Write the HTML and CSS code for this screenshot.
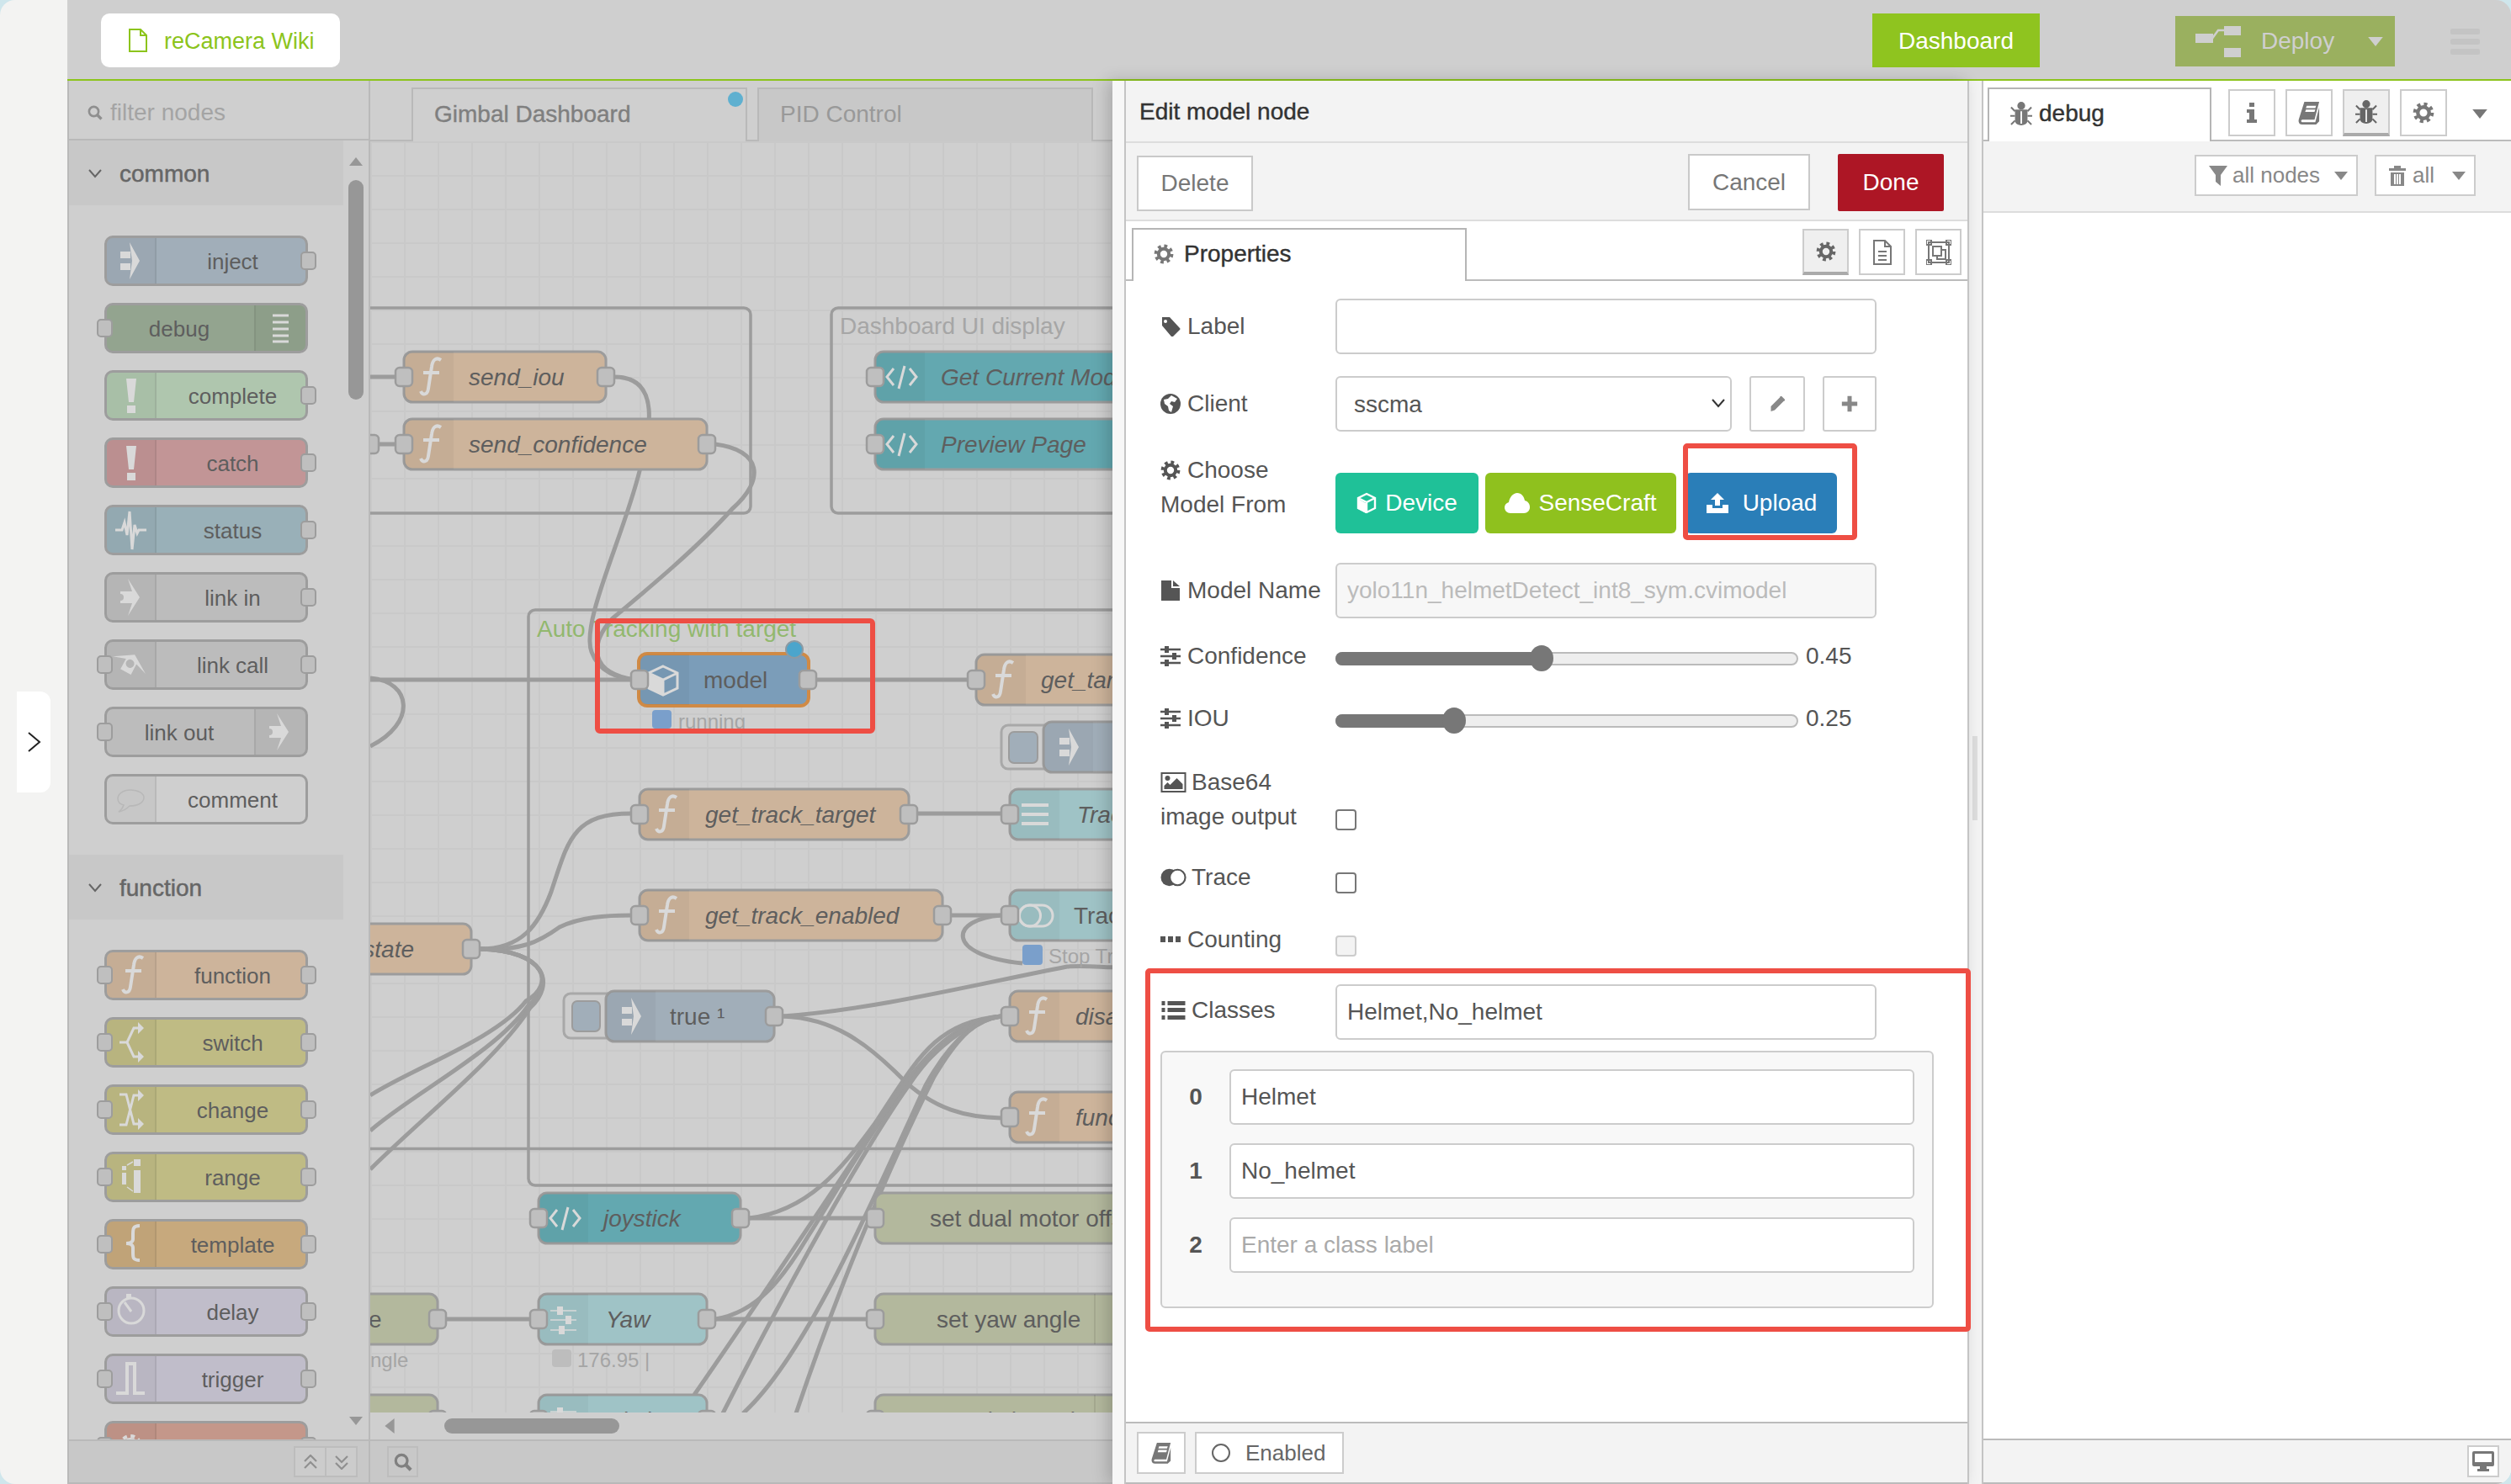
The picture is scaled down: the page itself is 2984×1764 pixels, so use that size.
FILE: index.html
```html
<!DOCTYPE html>
<html>
<head>
<meta charset="utf-8">
<title>reCamera Node-RED</title>
<link rel="stylesheet" href="styles.css">
</head>
<body>

<!-- icon sprites, node icons are drawn in a 59x60 cell -->
<svg class="sprites" width="0" height="0">
  <defs>
    <g id="i-f"><path class="ni-s" d="M46 10C40 6 36 10 35 18L31 44C30 52 24 52 22 47M25 25H44"/></g>
    <g id="i-inject"><path class="ni" d="M19 19H31V27H19ZM19 33H31V41H19ZM30 8L42 30L30 52L33 30Z"/></g>
    <g id="i-lines"><path class="ni-s thin" d="M23 15H42M23 23H42M23 31H42M23 39H42M23 46H42"/></g>
    <g id="i-alert"><path class="ni" d="M26 10H38L35 38H29ZM27 42H37V51H27Z"/></g>
    <g id="i-wave"><path class="ni-s thin" d="M13 30H21L24 21L27 36L30 8L33 53L36 24L39 34L41 30H50"/></g>
    <g id="i-link"><path class="ni" fill-rule="evenodd" d="M28 8L42 30L28 52L33 37H19V23H33ZM19 26V34A4 4 0 0 0 19 26Z"/></g>
    <g id="i-linkcall"><path class="ni" transform="rotate(-62 31 28) translate(0 -2)" fill-rule="evenodd" d="M28 8L42 30L28 52L33 37H19V23H33ZM30 25A5 5 0 1 0 30 35A5 5 0 1 0 30 25Z"/></g>
    <g id="i-comment"><path class="ni-o" d="M31 19C22 19 16 24 16 29C16 33 19 36 23 37C22 40 20 43 17 45C23 44 27 41 30 38C40 38 47 34 47 28C47 23 40 19 31 19Z"/></g>
    <g id="i-switch"><path class="ni-s thin" d="M18 30H27L35 13H42M27 30L35 47H42"/><path class="ni" d="M40 6L47 13L40 20ZM40 40L47 47L40 54Z"/></g>
    <g id="i-change"><path class="ni-s thin" d="M18 12H26L35 47H42M18 48H26L35 13H42"/><path class="ni" d="M40 6L47 13L40 20ZM40 40L47 47L40 54Z"/></g>
    <g id="i-range"><path class="ni" d="M21 17H26V22H21ZM21 25H26V39H21ZM35 9H43V17H35ZM35 22H43V49H35Z"/><path class="ni-s hair" d="M27 16L34 12M27 42L34 47"/></g>
    <g id="i-template"><path class="ni-s" d="M42 8C34 8 34 12 34 18V24C34 27 31 29 26 29C31 29 34 31 34 34V40C34 46 34 49 42 49"/></g>
    <g id="i-delay"><circle class="ni-s thin" cx="32" cy="29" r="15"/><path class="ni-s thin" d="M24 19L32 30"/><path class="ni" d="M26 9H32V14H26Z"/></g>
    <g id="i-trigger"><path class="ni-s" d="M14 47H27V12H36V47H48"/></g>
    <g id="i-gear"><circle class="ni-s" cx="31" cy="30" r="12" stroke-dasharray="5 4.4"/><circle class="ni-s" cx="31" cy="30" r="8"/></g>
    <g id="i-code"><path class="ni-s thin" d="M22 20L14 30L22 40M41 20L49 30L41 40M35 17L28 44"/></g>
    <g id="i-cube"><path class="ni" d="M12 24L29 32V49L12 41Z"/><path class="ni-s thin" d="M29 15L46 23V41L29 49L12 41V23ZM12 23L29 31L46 23M29 31V49"/></g>
    <g id="i-list"><path class="ni-s" d="M14 19H46M14 30H46M14 41H46"/></g>
    <g id="i-toggle"><rect class="ni-s thin" x="11" y="18" width="40" height="25" rx="12.5"/><circle class="ni-s thin" cx="24" cy="30.5" r="12.5"/></g>
    <g id="i-sliders"><path class="ni-s hair" d="M14 20H45M14 31H45M14 43H45"/><path class="ni" d="M22 15H29V25H22ZM32 26H39V36H32ZM24 38H31V48H24Z"/></g>

    <!-- small ui icons, take the text colour -->
    <symbol id="u-gear" viewBox="0 0 24 24"><circle cx="12" cy="12" r="9.4" fill="none" stroke="currentColor" stroke-width="4" stroke-dasharray="3.7 3.7"/><circle cx="12" cy="12" r="6.2" fill="none" stroke="currentColor" stroke-width="4"/></symbol>
    <symbol id="u-tag" viewBox="0 0 24 24"><path fill="currentColor" d="M2 1H11L23 14Q24 15 23 16L15 24Q14 25 13 24L2 11ZM6 4A2 2 0 1 0 6 8A2 2 0 1 0 6 4Z" fill-rule="evenodd"/></symbol>
    <symbol id="u-globe" viewBox="0 0 24 24"><circle cx="12" cy="12" r="12" fill="currentColor"/><path fill="#fff" d="M13 2L20 6L17 10L13 9L11 12L15 15L13 22L10 20L9 15L5 12L4 7L9 6Z"/></symbol>
    <symbol id="u-file" viewBox="0 0 24 24"><path fill="currentColor" d="M1 0H13V9H23V24H1ZM15 0L23 7H15Z"/></symbol>
    <symbol id="u-sliders" viewBox="0 0 24 24"><path fill="none" stroke="currentColor" stroke-width="2.4" d="M0 4H24M0 12H24M0 20H24"/><path fill="currentColor" d="M5 0H10V8H5ZM14 8H19V16H14ZM5 16H10V24H5Z"/></symbol>
    <symbol id="u-image" viewBox="0 0 30 24"><rect x="1" y="1" width="28" height="22" fill="none" stroke="currentColor" stroke-width="2"/><circle cx="8" cy="7" r="3" fill="currentColor"/><path fill="currentColor" d="M4 20V16L8 12L11 15L19 7L26 14V20Z"/></symbol>
    <symbol id="u-adjust" viewBox="0 0 32 24"><circle cx="11" cy="12" r="10.5" fill="currentColor"/><circle cx="21" cy="12" r="9.5" fill="#fff" stroke="currentColor" stroke-width="2.2"/></symbol>
    <symbol id="u-dots" viewBox="0 0 24 24"><path fill="currentColor" d="M0 8H6V15H0ZM9 8H15V15H9ZM18 8H24V15H18Z"/></symbol>
    <symbol id="u-list" viewBox="0 0 28 24"><path fill="currentColor" d="M0 1H4V6H0ZM7 1H28V6H7ZM0 9H4V14H0ZM7 9H28V14H7ZM0 18H4V23H0ZM7 18H28V23H7Z"/></symbol>
    <symbol id="u-pencil" viewBox="0 0 24 24"><path fill="currentColor" d="M16 2L22 8L8 22L2 24L2 16ZM17 0L19 0L24 5V7L22 8L16 2Z"/></symbol>
    <symbol id="u-plus" viewBox="0 0 24 24"><path fill="currentColor" d="M9 1H15V9H23V15H15V23H9V15H1V9H9Z"/></symbol>
    <symbol id="u-cube" viewBox="0 0 24 24"><path fill="currentColor" d="M2 7L11 12V24L2 19Z"/><path fill="none" stroke="currentColor" stroke-width="2.4" d="M12 1L22 6V18L12 23L2 18V6ZM2 6L12 11L22 6M12 11V23"/></symbol>
    <symbol id="u-cloud" viewBox="0 0 30 24"><path fill="currentColor" d="M7 24C3 24 0 21 0 17C0 14 2 12 5 11C6 5 10 0 15 0C20 0 23 4 24 9C28 10 30 13 30 17C30 21 27 24 23 24Z"/></symbol>
    <symbol id="u-upload" viewBox="0 0 28 24"><path fill="currentColor" d="M14 0L22 8H17V15H11V8H6ZM1 14H8V18H20V14H27V24H1Z"/></symbol>
    <symbol id="u-doc" viewBox="0 0 24 30"><path fill="none" stroke="currentColor" stroke-width="2" d="M2 1H15L22 8V29H2ZM15 1V8H22M7 14H17M7 19H17M7 24H17"/></symbol>
    <symbol id="u-frame" viewBox="0 0 30 30"><path fill="none" stroke="currentColor" stroke-width="2" d="M3 3H27V27H3ZM8 8H18V19H8ZM13 19V23H23V12H18M0 0H6V6H0ZM24 0H30V6H24ZM0 24H6V30H0ZM24 24H30V30H24Z"/></symbol>
    <symbol id="u-book" viewBox="0 0 28 30"><path fill="currentColor" d="M8 1H27L21 24H6C4 24 3 26 5 27H22L27 8V26L23 30H5C1 30 0 26 1 23ZM11 6L10 9H22L23 6ZM10 11L9 14H21L22 11Z" fill-rule="evenodd"/></symbol>
    <symbol id="u-bug" viewBox="0 0 28 30"><circle cx="14" cy="5" r="5" fill="currentColor"/><path fill="currentColor" d="M6 10H22V24C22 28 18 30 14 30C10 30 6 28 6 24ZM13 12V28H15V12Z" fill-rule="evenodd"/><path fill="none" stroke="currentColor" stroke-width="2.2" d="M6 12L1 7M22 12L27 7M6 18H0M22 18H28M6 24L1 29M22 24L27 29"/></symbol>
    <symbol id="u-info" viewBox="0 0 14 24"><path fill="currentColor" d="M4 0H10V5H4ZM1 8H10V20H13V24H1V20H4V12H1Z"/></symbol>
    <symbol id="u-filter" viewBox="0 0 22 24"><path fill="currentColor" d="M0 0H22L14 11V24L8 19V11Z"/></symbol>
    <symbol id="u-trash" viewBox="0 0 20 24"><path fill="currentColor" d="M6 0H14V3H20V6H0V3H6ZM2 8H18V24H2ZM6 10V22H8V10ZM9 10V22H11V10ZM12 10V22H14V10Z" fill-rule="evenodd"/></symbol>
    <symbol id="u-monitor" viewBox="0 0 26 24"><path fill="currentColor" d="M2 0H24Q26 0 26 2V16Q26 18 24 18H2Q0 18 0 16V2Q0 0 2 0ZM3 3V13H23V3ZM9 18H17V21H20V24H6V21H9Z" fill-rule="evenodd"/></symbol>
    <symbol id="u-search" viewBox="0 0 24 24"><circle cx="10" cy="10" r="7.5" fill="none" stroke="currentColor" stroke-width="3.5"/><path d="M15 15L22 22" stroke="currentColor" stroke-width="4.5" fill="none"/></symbol>
    <symbol id="u-chev" viewBox="0 0 16 12"><path d="M1 2L8 10L15 2" fill="none" stroke="currentColor" stroke-width="2"/></symbol>
    <symbol id="u-dchev" viewBox="0 0 16 18"><path d="M1 8L8 1L15 8M1 16L8 9L15 16" fill="none" stroke="currentColor" stroke-width="2.2"/></symbol>
    <symbol id="u-caret" viewBox="0 0 16 10"><path d="M0 0H16L8 10Z" fill="currentColor"/></symbol>
    <pattern id="grid" x="440" y="168" width="40" height="40" patternUnits="userSpaceOnUse">
      <path d="M0 1H40M1 0V40" fill="none" stroke="#c9c9c9" stroke-width="2"/>
    </pattern>
    <path id="shade" class="shade" d="M10 0H59V60H10A10 10 0 0 1 0 50V10A10 10 0 0 1 10 0Z"/>
    <rect id="port" class="port" width="20" height="22" rx="5"/>
  </defs>
</svg>

<div class="app">
  <aside class="strip">
    <button class="strip-handle"><svg width="17" height="24" viewBox="0 0 17 24"><path d="M2 1L15 12L2 23" fill="none" stroke="#222" stroke-width="2"/></svg></button>
  </aside>

  <div class="editor">
    <header class="topbar">
      <a class="wiki"><svg class="wiki-ic" width="22" height="28" viewBox="0 0 22 28"><path d="M1 1H14L21 8V27H1ZM14 1V8H21" fill="none" stroke="#8cc41c" stroke-width="2"/></svg>reCamera Wiki</a>
      <a class="dash-btn">Dashboard</a>
      <div class="deploy">
        <svg width="55" height="37" viewBox="0 0 55 37"><path fill="#cfcfcf" d="M0 9H21V20H0ZM34 0H54V11H34ZM34 26H54V37H34Z"/><path d="M19 16L27 5H36" fill="none" stroke="#cfcfcf" stroke-width="2.5"/></svg>
        <span class="deploy-txt">Deploy</span>
        <svg class="deploy-caret"><use href="#u-caret"/></svg>
      </div>
      <div class="menu-btn"><i></i><i></i><i></i></div>
    </header>

    <div class="main">
      <section class="palette">
        <div class="filter"><svg class="ic18"><use href="#u-search"/></svg><span>filter nodes</span></div>
        <div class="palette-body">
          <div class="pal-scroll">
            <div class="cat"><svg class="cat-chev"><use href="#u-chev"/></svg><b>common</b></div>
            <div class="plist">
              <div class="pnode c-inject"><span class="pic"><svg viewBox="0 0 59 60"><use href="#i-inject"/></svg></span><span class="plabel">inject</span><i class="pport r"></i></div>
              <div class="pnode c-debug"><i class="pport l"></i><span class="plabel rl">debug</span><span class="pic right"><svg viewBox="0 0 59 60"><use href="#i-lines"/></svg></span></div>
              <div class="pnode c-complete"><span class="pic"><svg viewBox="0 0 59 60"><use href="#i-alert"/></svg></span><span class="plabel">complete</span><i class="pport r"></i></div>
              <div class="pnode c-catch"><span class="pic"><svg viewBox="0 0 59 60"><use href="#i-alert"/></svg></span><span class="plabel">catch</span><i class="pport r"></i></div>
              <div class="pnode c-status"><span class="pic"><svg viewBox="0 0 59 60"><use href="#i-wave"/></svg></span><span class="plabel">status</span><i class="pport r"></i></div>
              <div class="pnode c-link"><span class="pic"><svg viewBox="0 0 59 60"><use href="#i-link"/></svg></span><span class="plabel">link in</span><i class="pport r"></i></div>
              <div class="pnode c-link"><i class="pport l"></i><span class="pic"><svg viewBox="0 0 59 60"><use href="#i-linkcall"/></svg></span><span class="plabel">link call</span><i class="pport r"></i></div>
              <div class="pnode c-link"><i class="pport l"></i><span class="plabel rl">link out</span><span class="pic right"><svg viewBox="0 0 59 60"><use href="#i-link"/></svg></span></div>
              <div class="pnode c-comment"><span class="pic"><svg viewBox="0 0 59 60"><use href="#i-comment"/></svg></span><span class="plabel">comment</span></div>
            </div>
            <div class="cat"><svg class="cat-chev"><use href="#u-chev"/></svg><b>function</b></div>
            <div class="plist">
              <div class="pnode c-func"><i class="pport l"></i><span class="pic"><svg viewBox="0 0 59 60"><use href="#i-f"/></svg></span><span class="plabel">function</span><i class="pport r"></i></div>
              <div class="pnode c-switch"><i class="pport l"></i><span class="pic"><svg viewBox="0 0 59 60"><use href="#i-switch"/></svg></span><span class="plabel">switch</span><i class="pport r"></i></div>
              <div class="pnode c-switch"><i class="pport l"></i><span class="pic"><svg viewBox="0 0 59 60"><use href="#i-change"/></svg></span><span class="plabel">change</span><i class="pport r"></i></div>
              <div class="pnode c-switch"><i class="pport l"></i><span class="pic"><svg viewBox="0 0 59 60"><use href="#i-range"/></svg></span><span class="plabel">range</span><i class="pport r"></i></div>
              <div class="pnode c-template"><i class="pport l"></i><span class="pic"><svg viewBox="0 0 59 60"><use href="#i-template"/></svg></span><span class="plabel">template</span><i class="pport r"></i></div>
              <div class="pnode c-delay"><i class="pport l"></i><span class="pic"><svg viewBox="0 0 59 60"><use href="#i-delay"/></svg></span><span class="plabel">delay</span><i class="pport r"></i></div>
              <div class="pnode c-delay"><i class="pport l"></i><span class="pic"><svg viewBox="0 0 59 60"><use href="#i-trigger"/></svg></span><span class="plabel">trigger</span><i class="pport r"></i></div>
              <div class="pnode c-exec"><i class="pport l"></i><span class="pic"><svg viewBox="0 0 59 60"><use href="#i-gear"/></svg></span><span class="plabel"></span><i class="pport r"></i></div>
            </div>
          </div>
          <div class="pal-bar">
            <svg class="bar-arrow"><use href="#u-caret" transform="rotate(180 9 5)"/></svg>
            <div class="pal-thumb"></div>
            <svg class="bar-arrow down"><use href="#u-caret"/></svg>
          </div>
        </div>
        <div class="pal-foot">
          <div class="btn-pair"><span><svg class="ic16"><use href="#u-dchev"/></svg></span><span><svg class="ic16 flip"><use href="#u-dchev"/></svg></span></div>
        </div>
      </section>

      <section class="workspace">
        <div class="ws-tabs">
          <div class="ws-tab active">Gimbal Dashboard<i class="ws-dot"></i></div>
          <div class="ws-tab">PID Control</div>
        </div>

        <svg class="canvas" viewBox="440 168 882 1511">
          <rect x="440" y="168" width="882" height="1511" fill="url(#grid)"/>

          <!-- groups -->
          <rect class="grp" x="300" y="366" width="592" height="244" rx="8"/>
          <rect class="grp" x="988" y="366" width="500" height="244" rx="8"/>
          <rect class="grp" x="628" y="725" width="900" height="684" rx="8"/>
          <path class="grp" d="M440 1365.5H1322"/>
          <text class="grp-t" x="998" y="397">Dashboard UI display</text>
          <text class="grp-t green" x="638" y="757">Auto Tracking with target</text>

          <!-- wires -->
          <path class="w" d="M440 448H480M440 528H480"/>
          <path class="w" d="M730 448C790 448 770 520 760 560C740 640 690 740 703 775C712 800 735 806 755 808"/>
          <path class="w" d="M850 528C905 535 910 570 870 605C830 650 770 700 728 735C700 765 700 800 755 808"/>
          <path class="w" d="M440 808H760M970 808H1160M440 806C490 810 495 860 440 887"/>
          <path class="w" d="M1090 967H1190M1130 1088H1190M530 1568H640M890 1448H1040M850 1568H1040"/>
          <path class="w" d="M570 1128C620 1130 640 1120 665 1102C690 1090 720 1088 750 1088"/>
          <path class="w" d="M570 1128C620 1128 640 1100 655 1060C675 1000 680 967 750 967"/>
          <path class="w" d="M570 1128C650 1130 660 1170 625 1190C590 1235 490 1270 440 1302"/>
          <path class="w" d="M570 1128C650 1130 660 1170 628 1195C590 1250 490 1300 440 1344"/>
          <path class="w" d="M570 1128C650 1130 660 1170 630 1198C590 1260 500 1330 440 1390"/>
          <path class="w" d="M1190 1088C1130 1092 1120 1135 1215 1145"/>
          <path class="w" d="M930 1208C1040 1200 1160 1170 1268 1149C1290 1147 1310 1150 1330 1150"/>
          <path class="w" d="M930 1208C990 1210 1030 1240 1070 1280C1110 1320 1150 1328 1190 1329"/>
          <path class="w" d="M890 1448C960 1440 1000 1390 1040 1335C1090 1260 1110 1215 1190 1208"/>
          <path class="w" d="M850 1568C900 1560 930 1520 960 1470C1030 1360 1100 1220 1190 1208"/>
          <path class="w" d="M825 1658C900 1550 1000 1400 1060 1310C1100 1250 1140 1212 1190 1208"/>
          <path class="w" d="M859 1680C940 1520 1030 1360 1080 1290C1110 1245 1150 1212 1190 1208"/>
          <path class="w" d="M883 1680C960 1610 1040 1420 1100 1290C1125 1245 1155 1212 1190 1208"/>
          <path class="w" d="M946 1680C1000 1520 1060 1380 1110 1280C1140 1230 1160 1212 1190 1208"/>

          <!-- send_iou -->
          <rect class="n fn" x="480" y="418" width="240" height="60" rx="10"/><use href="#shade" x="480" y="418"/><use href="#i-f" x="478" y="418"/>
          <text class="nt it" x="557" y="458">send_iou</text><use href="#port" x="470" y="437"/><use href="#port" x="710" y="437"/>
          <!-- send_confidence -->
          <rect class="n fn" x="480" y="498" width="360" height="60" rx="10"/><use href="#shade" x="480" y="498"/><use href="#i-f" x="478" y="498"/>
          <text class="nt it" x="557" y="538">send_confidence</text><use href="#port" x="470" y="517"/><use href="#port" x="830" y="517"/>
          <use href="#port" x="430" y="517"/>
          <!-- dashboard templates -->
          <rect class="n tp" x="1040" y="418" width="400" height="60" rx="10"/><use href="#shade" x="1040" y="418"/><use href="#i-code" x="1040" y="418"/>
          <text class="nt it" x="1118" y="458">Get Current Model</text><use href="#port" x="1030" y="437"/>
          <rect class="n tp" x="1040" y="498" width="400" height="60" rx="10"/><use href="#shade" x="1040" y="498"/><use href="#i-code" x="1040" y="498"/>
          <text class="nt it" x="1118" y="538">Preview Page</text><use href="#port" x="1030" y="517"/>

          <!-- model -->
          <rect class="n sel" x="759" y="777" width="202" height="62" rx="10"/><use href="#shade" x="760" y="778"/><use href="#i-cube" x="759" y="777"/>
          <text class="nt" x="836" y="818">model</text><use href="#port" x="750" y="797"/><use href="#port" x="950" y="797"/>
          <circle class="dot" cx="944" cy="772" r="10"/>
          <rect class="st blue" x="775" y="844" width="23" height="22" rx="4"/><text class="stt" x="806" y="866">running</text>

          <!-- get_target -->
          <rect class="n fn" x="1160" y="778" width="300" height="60" rx="10"/><use href="#shade" x="1160" y="778"/><use href="#i-f" x="1158" y="778"/>
          <text class="nt it" x="1237" y="818">get_target</text><use href="#port" x="1150" y="797"/>
          <!-- small inject -->
          <rect class="inj-btn" x="1190" y="862" width="80" height="52" rx="8"/><rect class="inj-in" x="1199" y="870" width="34" height="37" rx="6"/>
          <rect class="n ij" x="1240" y="858" width="200" height="60" rx="10"/><use href="#shade" x="1240" y="858"/><use href="#i-inject" x="1240" y="858"/>

          <!-- get_track_target -->
          <rect class="n fn" x="760" y="938" width="320" height="60" rx="10"/><use href="#shade" x="760" y="938"/><use href="#i-f" x="758" y="938"/>
          <text class="nt it" x="838" y="978">get_track_target</text><use href="#port" x="750" y="957"/><use href="#port" x="1070" y="957"/>
          <rect class="n da" x="1200" y="938" width="300" height="60" rx="10"/><use href="#shade" x="1200" y="938"/><use href="#i-list" x="1200" y="938"/>
          <text class="nt it" x="1280" y="978">Track</text><use href="#port" x="1190" y="957"/>

          <!-- state -->
          <rect class="n fn" x="300" y="1098" width="260" height="60" rx="10"/>
          <text class="nt it end" x="492" y="1138">state</text><use href="#port" x="550" y="1117"/>
          <!-- get_track_enabled -->
          <rect class="n fn" x="760" y="1058" width="360" height="60" rx="10"/><use href="#shade" x="760" y="1058"/><use href="#i-f" x="758" y="1058"/>
          <text class="nt it" x="838" y="1098">get_track_enabled</text><use href="#port" x="750" y="1077"/><use href="#port" x="1110" y="1077"/>
          <rect class="n da" x="1200" y="1058" width="300" height="60" rx="10"/><use href="#shade" x="1200" y="1058"/><use href="#i-toggle" x="1200" y="1058"/>
          <text class="nt" x="1276" y="1098">Track</text><use href="#port" x="1190" y="1077"/>
          <rect class="st blue" x="1215" y="1123" width="24" height="24" rx="4"/><text class="stt" x="1246" y="1145">Stop Track</text>

          <!-- true inject -->
          <rect class="inj-btn" x="670" y="1181" width="80" height="53" rx="8"/><rect class="inj-in" x="680" y="1190" width="33" height="36" rx="6"/>
          <rect class="n ij" x="720" y="1178" width="200" height="60" rx="10"/><use href="#shade" x="720" y="1178"/><use href="#i-inject" x="720" y="1178"/>
          <text class="nt" x="796" y="1218">true ¹</text><use href="#port" x="910" y="1197"/>
          <rect class="n fn" x="1200" y="1178" width="300" height="60" rx="10"/><use href="#shade" x="1200" y="1178"/><use href="#i-f" x="1198" y="1178"/>
          <text class="nt it" x="1278" y="1218">disable</text><use href="#port" x="1190" y="1197"/>
          <rect class="n fn" x="1200" y="1298" width="300" height="60" rx="10"/><use href="#shade" x="1200" y="1298"/><use href="#i-f" x="1198" y="1298"/>
          <text class="nt it" x="1278" y="1338">function</text><use href="#port" x="1190" y="1317"/>

          <!-- joystick row -->
          <rect class="n tp" x="640" y="1418" width="240" height="60" rx="10"/><use href="#shade" x="640" y="1418"/><use href="#i-code" x="640" y="1418"/>
          <text class="nt it" x="717" y="1458">joystick</text><use href="#port" x="630" y="1437"/><use href="#port" x="870" y="1437"/>
          <rect class="n mo" x="1040" y="1418" width="460" height="60" rx="10"/>
          <text class="nt" x="1105" y="1458">set dual motor offset</text><use href="#port" x="1030" y="1437"/>

          <!-- yaw row -->
          <rect class="n mo" x="300" y="1538" width="220" height="60" rx="10"/><text class="nt" x="438" y="1578">e</text><use href="#port" x="510" y="1557"/>
          <text class="stt" x="440" y="1625">ngle</text>
          <rect class="n da" x="640" y="1538" width="200" height="60" rx="10"/><use href="#shade" x="640" y="1538"/><use href="#i-sliders" x="640" y="1538"/>
          <text class="nt it" x="720" y="1578">Yaw</text><use href="#port" x="630" y="1557"/><use href="#port" x="830" y="1557"/>
          <rect class="st" x="656" y="1604" width="23" height="21" rx="4"/><text class="stt" x="686" y="1625">176.95 |</text>
          <rect class="n mo" x="1040" y="1538" width="460" height="60" rx="10"/><path class="sep" d="M1301 1538V1598"/>
          <text class="nt" x="1113" y="1578">set yaw angle</text><use href="#port" x="1030" y="1557"/>

          <!-- pitch row, clipped by the scrollbar -->
          <rect class="n mo" x="300" y="1658" width="220" height="60" rx="10"/><use href="#port" x="510" y="1677"/>
          <rect class="n da" x="640" y="1658" width="200" height="60" rx="10"/><use href="#shade" x="640" y="1658"/><use href="#i-sliders" x="640" y="1658"/>
          <text class="nt it" x="720" y="1698">Pitch</text><use href="#port" x="630" y="1677"/><use href="#port" x="830" y="1677"/>
          <rect class="n mo" x="1040" y="1658" width="460" height="60" rx="10"/><path class="sep" d="M1301 1658V1718"/>
          <text class="nt" x="1113" y="1698">set pitch angle</text><use href="#port" x="1030" y="1677"/>

          <!-- annotation -->
          <rect class="red" x="710" y="738" width="327" height="131" rx="3"/>
        </svg>

        <div class="ws-scroll">
          <svg class="ws-left"><use href="#u-caret" transform="rotate(90 9 9)"/></svg>
          <div class="ws-thumb"></div>
        </div>
        <div class="ws-foot"><span class="search-btn"><svg class="ic22"><use href="#u-search"/></svg></span></div>
      </section>

      <section class="tray">
        <div class="tray-inner">
          <div class="tray-title">Edit model node</div>
          <div class="tray-actions">
            <button class="btn btn-del">Delete</button>
            <button class="btn btn-cancel">Cancel</button>
            <button class="btn btn-done">Done</button>
          </div>
          <div class="tray-tabs">
            <div class="tab-props"><svg class="ic24"><use href="#u-gear"/></svg>Properties</div>
            <div class="tab-ics">
              <span class="tab-ic on"><svg class="ic24"><use href="#u-gear"/></svg></span>
              <span class="tab-ic"><svg class="ic-doc"><use href="#u-doc"/></svg></span>
              <span class="tab-ic"><svg class="ic-frame"><use href="#u-frame"/></svg></span>
            </div>
          </div>

          <div class="form">
            <div class="row r-label">
              <label><svg class="fi"><use href="#u-tag"/></svg>Label</label>
              <input class="inp w-full" type="text">
            </div>
            <div class="row r-client">
              <label><svg class="fi"><use href="#u-globe"/></svg>Client</label>
              <div class="sel-wrap">
                <select class="inp"><option>sscma</option></select>
                <svg class="sel-chev"><use href="#u-chev"/></svg>
              </div>
              <button class="sq"><svg class="ic18"><use href="#u-pencil"/></svg></button>
              <button class="sq plus"><svg class="ic20"><use href="#u-plus"/></svg></button>
            </div>
            <div class="row r-choose">
              <label class="two"><span><svg class="fi"><use href="#u-gear"/></svg>Choose</span><span>Model From</span></label>
              <div class="srcs">
                <button class="src device"><svg class="ic26"><use href="#u-cube"/></svg>Device</button>
                <button class="src craft"><svg class="ic-cloud"><use href="#u-cloud"/></svg>SenseCraft</button>
                <button class="src upload"><svg class="ic-upload"><use href="#u-upload"/></svg>Upload</button>
              </div>
            </div>
            <div class="row r-name">
              <label><svg class="fi"><use href="#u-file"/></svg>Model Name</label>
              <input class="inp w-full off" type="text" placeholder="yolo11n_helmetDetect_int8_sym.cvimodel" disabled>
            </div>
            <div class="row r-slider conf">
              <label><svg class="fi"><use href="#u-sliders"/></svg>Confidence</label>
              <div class="slider"><div class="fill"></div><div class="thumb"></div></div>
              <span class="val">0.45</span>
            </div>
            <div class="row r-slider iou">
              <label><svg class="fi"><use href="#u-sliders"/></svg>IOU</label>
              <div class="slider"><div class="fill"></div><div class="thumb"></div></div>
              <span class="val">0.25</span>
            </div>
            <div class="row r-base">
              <label class="two"><span><svg class="fi wide"><use href="#u-image"/></svg>Base64</span><span>image output</span></label>
              <input class="chk" type="checkbox">
            </div>
            <div class="row r-trace">
              <label><svg class="fi wide"><use href="#u-adjust"/></svg>Trace</label>
              <input class="chk" type="checkbox">
            </div>
            <div class="row r-count">
              <label><svg class="fi"><use href="#u-dots"/></svg>Counting</label>
              <input class="chk" type="checkbox" disabled>
            </div>
            <div class="row r-classes">
              <label><svg class="fi wide"><use href="#u-list"/></svg>Classes</label>
              <input class="inp w-full" type="text" value="Helmet,No_helmet">
            </div>
            <div class="class-box">
              <div class="class-row"><b>0</b><input class="inp" type="text" value="Helmet"></div>
              <div class="class-row"><b>1</b><input class="inp" type="text" value="No_helmet"></div>
              <div class="class-row"><b>2</b><input class="inp" type="text" placeholder="Enter a class label"></div>
            </div>
          </div>

          <div class="tray-foot">
            <span class="foot-btn book"><svg class="ic24"><use href="#u-book"/></svg></span>
            <span class="foot-btn enabled"><i class="ring"></i>Enabled</span>
          </div>

          <div class="red-box upload-mark"></div>
          <div class="red-box classes-mark"></div>
        </div>
      </section>

      <div class="split"><i></i></div>

      <section class="sidebar">
        <div class="side-tabs">
          <div class="side-tab"><svg class="ic-bug"><use href="#u-bug"/></svg>debug</div>
          <span class="side-ic"><svg class="ic-info"><use href="#u-info"/></svg></span>
          <span class="side-ic"><svg class="ic-bug"><use href="#u-book"/></svg></span>
          <span class="side-ic on"><svg class="ic-bug"><use href="#u-bug"/></svg></span>
          <span class="side-ic"><svg class="ic-bug"><use href="#u-gear"/></svg></span>
          <svg class="side-caret"><use href="#u-caret"/></svg>
        </div>
        <div class="side-tools">
          <span class="tool nodes"><svg class="ic-filter"><use href="#u-filter"/></svg>all nodes<svg class="tool-caret"><use href="#u-caret"/></svg></span>
          <span class="tool clear"><svg class="ic-trash"><use href="#u-trash"/></svg>all<svg class="tool-caret"><use href="#u-caret"/></svg></span>
        </div>
        <div class="side-body"></div>
        <div class="side-foot"><span class="mon"><svg class="ic-mon"><use href="#u-monitor"/></svg></span></div>
      </section>
    </div>
  </div>
</div>

</body>
</html>
```

FILE: styles.css
```css
html, body {
	margin: 0;
	padding: 0;
	background: #cfe6ec;
}
body {
	width: 2984px;
	height: 1764px;
	overflow: hidden;
	font-family: "Liberation Sans", Arial, sans-serif;
	font-size: 28px;
	color: #555;
}
.sprites {
	position: absolute;
}
button, input, select {
	font-family: inherit;
	font-size: 28px;
}

/* app shell */
.app {
	display: flex;
	width: 2984px;
	height: 1764px;
	border-radius: 18px;
	overflow: hidden;
}
.strip {
	width: 80px;
	background: #f3f3f2;
	display: flex;
	align-items: center;
	flex: none;
}
.strip-handle {
	width: 40px;
	height: 120px;
	margin-left: 20px;
	padding: 0;
	border: 0;
	border-radius: 0 12px 12px 0;
	background: #fff;
	display: flex;
	align-items: center;
	justify-content: center;
}
.editor {
	flex: 1;
	min-width: 0;
	display: flex;
	flex-direction: column;
}

/* top bar */
.topbar {
	height: 94px;
	flex: none;
	background: #cfcfcf;
	border-bottom: 2px solid #8cc41c;
	display: flex;
	align-items: flex-start;
}
.wiki {
	margin: 16px 0 0 40px;
	width: 284px;
	height: 64px;
	background: #fff;
	border-radius: 10px;
	color: #8cc41c;
	font-size: 27px;
	display: flex;
	align-items: center;
	box-sizing: border-box;
	padding: 3px 0 0 33px;
}
.wiki-ic {
	margin: -3px 20px 0 0;
}
.dash-btn {
	margin: 16px 0 0 1821px;
	width: 199px;
	height: 64px;
	box-sizing: border-box;
	padding-top: 2px;
	background: #8fc41f;
	color: #fff;
	display: flex;
	align-items: center;
	justify-content: center;
}
.deploy {
	margin: 19px 0 0 161px;
	width: 261px;
	height: 60px;
	background: #9ab05f;
	color: #cfcfcf;
	display: flex;
	align-items: center;
	box-sizing: border-box;
	padding-left: 24px;
}
.deploy-txt {
	margin-left: 23px;
}
.deploy-caret {
	width: 18px;
	height: 11px;
	margin-left: 40px;
}
.menu-btn {
	margin: 34px 0 0 66px;
	width: 35px;
	display: flex;
	flex-direction: column;
	gap: 5px;
}
.menu-btn i {
	height: 7px;
	border-radius: 2px;
	background: #c4c4c4;
}

.main {
	flex: 1;
	min-height: 0;
	display: flex;
}

/* palette */
.palette {
	width: 360px;
	flex: none;
	box-sizing: border-box;
	border-left: 2px solid #b9b9b9;
	border-right: 2px solid #b9b9b9;
	border-bottom: 2px solid #b9b9b9;
	background: #cfcfcf;
	display: flex;
	flex-direction: column;
}
.filter {
	height: 71px;
	flex: none;
	box-sizing: border-box;
	border-bottom: 2px solid #b9b9b9;
	display: flex;
	align-items: center;
	padding: 7px 0 0 22px;
	color: #a4a4a4;
}
.filter .ic18 {
	color: #8f8f8f;
	margin-right: 9px;
}
.ic18 {
	width: 18px;
	height: 18px;
}
.ic16 {
	width: 16px;
	height: 18px;
	color: #909090;
}
.flip {
	transform: scaleY(-1);
}
.ic20 {
	width: 20px;
	height: 20px;
}
.ic22 {
	width: 22px;
	height: 24px;
	color: #808080;
}
.ic24 {
	width: 24px;
	height: 28px;
}
.ic26 {
	width: 24px;
	height: 28px;
}
.palette-body {
	flex: 1;
	min-height: 0;
	display: flex;
}
.pal-scroll {
	width: 326px;
	overflow: hidden;
}
.cat {
	height: 77px;
	background: #c8c8c8;
	display: flex;
	align-items: center;
	padding-left: 23px;
	color: #666;
}
.cat b {
	font-weight: normal;
	-webkit-text-stroke: 0.5px #666;
	margin-left: 21px;
	padding-top: 2px;
}
.cat-chev {
	width: 16px;
	height: 12px;
}
.plist {
	padding: 36px 0 36px 42px;
	display: flex;
	flex-direction: column;
	gap: 20px;
}
.pnode {
	width: 242px;
	height: 60px;
	box-sizing: border-box;
	flex: none;
	border: 3px solid #9d9d9d;
	border-radius: 10px;
	display: flex;
	position: relative;
	font-size: 26px;
	color: #5e5e5e;
}
.pic {
	width: 57px;
	flex: none;
	background: rgba(0, 0, 0, 0.035);
	border-right: 2px solid rgba(0, 0, 0, 0.07);
	border-radius: 7px 0 0 7px;
}
.pic.right {
	width: 59px;
	border-right: 0;
	border-left: 2px solid rgba(0, 0, 0, 0.07);
	border-radius: 0 7px 7px 0;
}
.pic svg {
	display: block;
	width: 59px;
	height: 60px;
	margin: -3px 0 0 -3px;
}
.plabel {
	flex: 1;
	text-align: center;
	line-height: 56px;
	padding-left: 4px;
}
.plabel.rl {
	padding-left: 0;
	padding-right: 3px;
}
.pport {
	position: absolute;
	top: 16px;
	width: 19px;
	height: 22px;
	box-sizing: border-box;
	background: #bfbfbf;
	border: 2px solid #9d9d9d;
	border-radius: 5px;
}
.pport.l {
	left: -12px;
}
.pport.r {
	right: -13px;
}
.c-inject { background: #a1aeb9; }
.c-debug { background: #93a48f; }
.c-complete { background: #afc6ae; }
.c-catch { background: #c29596; }
.c-status { background: #99b0b8; }
.c-link { background: #bcbcbc; }
.c-comment { background: #cfcfcf; }
.c-func { background: #cdb49b; }
.c-switch { background: #bfbb84; }
.c-template { background: #c7a97d; }
.c-delay { background: #c0bdca; }
.c-exec { background: #c4978a; }

.pal-bar {
	width: 30px;
	position: relative;
}
.pal-thumb {
	position: absolute;
	left: 6px;
	top: 47px;
	width: 18px;
	height: 261px;
	border-radius: 9px;
	background: #979797;
}
.bar-arrow {
	position: absolute;
	left: 6px;
	top: 20px;
	width: 18px;
	height: 10px;
	color: #979797;
}
.bar-arrow.down {
	top: 1517px;
}
.pal-foot {
	height: 49px;
	flex: none;
	border-top: 2px solid #b9b9b9;
	background: #c8c8c8;
	display: flex;
	justify-content: flex-end;
	align-items: center;
	padding-right: 13px;
}
.btn-pair {
	display: flex;
	border: 2px solid #bdbdbd;
	background: #cccccc;
}
.btn-pair span {
	width: 35px;
	height: 33px;
	display: flex;
	align-items: center;
	justify-content: center;
}
.btn-pair span + span {
	border-left: 2px solid #bdbdbd;
}

/* workspace */
.workspace {
	width: 882px;
	flex: none;
	display: flex;
	flex-direction: column;
	background: #cfcfcf;
}
.ws-tabs {
	height: 72px;
	flex: none;
	box-sizing: border-box;
	border-bottom: 2px solid #b9b9b9;
	display: flex;
	align-items: flex-end;
	padding-left: 49px;
	gap: 12px;
}
.ws-tab {
	height: 64px;
	width: 399px;
	box-sizing: border-box;
	margin-bottom: -2px;
	border: 2px solid #b9b9b9;
	border-bottom: 0;
	background: #c8c8c8;
	color: #999;
	padding-left: 25px;
	line-height: 60px;
}
.ws-tab.active {
	background: #cfcfcf;
	color: #7f7f7f;
	-webkit-text-stroke: 0.4px #7f7f7f;
	position: relative;
}
.ws-dot {
	position: absolute;
	right: 3px;
	top: 3px;
	width: 18px;
	height: 18px;
	border-radius: 50%;
	background: #5fb0d0;
}
.canvas {
	width: 882px;
	height: 1511px;
	flex: none;
	display: block;
	background: #cfcfcf;
}
.ws-scroll {
	height: 32px;
	flex: none;
	display: flex;
	align-items: center;
}
.ws-left {
	width: 18px;
	height: 18px;
	margin-left: 14px;
	color: #979797;
}
.ws-thumb {
	width: 208px;
	height: 18px;
	margin-left: 56px;
	border-radius: 9px;
	background: #979797;
}
.ws-foot {
	height: 53px;
	flex: none;
	box-sizing: border-box;
	border-top: 2px solid #b9b9b9;
	border-bottom: 2px solid #b9b9b9;
	background: #c8c8c8;
	display: flex;
	align-items: center;
	padding-left: 20px;
}
.search-btn {
	width: 37px;
	height: 37px;
	box-sizing: border-box;
	border: 2px solid #bdbdbd;
	display: flex;
	align-items: center;
	justify-content: center;
}

/* canvas pieces */
.grp {
	fill: none;
	stroke: #9c9c9c;
	stroke-width: 3.5;
}
.grp-t {
	font-size: 28px;
	fill: #a6a6a6;
}
.grp-t.green {
	fill: #92b86e;
}
.w {
	fill: none;
	stroke: #9c9c9c;
	stroke-width: 5;
}
.n {
	stroke: #9c9c9c;
	stroke-width: 3;
}
.fn { fill: #cdb49b; }
.tp { fill: #63a8b0; }
.da { fill: #9fc3c6; }
.ij { fill: #a1aeb9; }
.mo { fill: #b3b89d; }
.sel {
	fill: #7b9db9;
	stroke: #d08a45;
	stroke-width: 4;
}
.shade {
	fill: rgba(0, 0, 0, 0.035);
}
.sep {
	stroke: rgba(0, 0, 0, 0.08);
	stroke-width: 2;
}
.port {
	fill: #bfbfbf;
	stroke: #9c9c9c;
	stroke-width: 2.5;
}
.nt {
	font-size: 28px;
	fill: #5e5e5e;
}
.it {
	font-style: italic;
}
.end {
	text-anchor: end;
}
.stt {
	font-size: 24px;
	fill: #a5a5a5;
}
.st {
	fill: #bdbdbd;
}
.st.blue {
	fill: #7a9fcb;
}
.dot {
	fill: #4ba5cc;
	stroke: #8c9aa3;
	stroke-width: 2;
}
.inj-btn {
	fill: #cdcdcd;
	stroke: #a8a8a8;
	stroke-width: 3;
}
.inj-in {
	fill: #a1aeb9;
	stroke: #9c9c9c;
	stroke-width: 2;
}
.red {
	fill: none;
	stroke: #ee4e44;
	stroke-width: 6;
}
.ni {
	fill: #d9d9d9;
	stroke: none;
}
.ni-s {
	fill: none;
	stroke: #d9d9d9;
	stroke-width: 4;
}
.ni-s.thin {
	stroke-width: 3;
}
.ni-s.hair {
	stroke-width: 1.5;
}
.ni-o {
	fill: none;
	stroke: #b8b8b8;
	stroke-width: 1.5;
}

/* edit tray */
.tray {
	width: 1018px;
	flex: none;
	box-sizing: border-box;
	border-left: 14px solid #f7f7f7;
	background: #fff;
	box-shadow: -6px 0 18px rgba(0, 0, 0, 0.18);
	position: relative;
	z-index: 2;
}
.tray-inner {
	height: 100%;
	box-sizing: border-box;
	border-left: 2px solid #c4c4c4;
	border-right: 2px solid #c4c4c4;
	display: flex;
	flex-direction: column;
	position: relative;
}
.tray-title {
	height: 74px;
	flex: none;
	box-sizing: border-box;
	background: #f3f3f3;
	border-bottom: 2px solid #dddddd;
	color: #333;
	-webkit-text-stroke: 0.4px #333;
	padding-left: 16px;
	line-height: 74px;
}
.tray-actions {
	height: 93px;
	flex: none;
	box-sizing: border-box;
	background: #f3f3f3;
	border-bottom: 2px solid #dddddd;
	display: flex;
	align-items: flex-start;
	padding: 13px 28px 0 13px;
}
.btn {
	height: 67px;
	box-sizing: border-box;
	border: 2px solid #c9c9c9;
	background: #fff;
	color: #777;
}
.btn-del {
	width: 138px;
	margin-top: 2px;
	height: 66px;
	margin-right: auto;
}
.btn-cancel {
	width: 145px;
	margin-right: 33px;
}
.btn-done {
	width: 126px;
	height: 68px;
	background: #ad1625;
	border-color: #ad1625;
	color: #fff;
	border-radius: 2px;
}
.tray-tabs {
	height: 71px;
	flex: none;
	box-sizing: border-box;
	border-bottom: 2px solid #bbbbbb;
	display: flex;
	justify-content: space-between;
	padding: 0 7px;
}
.tab-props {
	width: 398px;
	height: 63px;
	margin-top: 8px;
	box-sizing: border-box;
	border: 2px solid #b5b5b5;
	border-bottom: 0;
	background: #fff;
	color: #333;
	-webkit-text-stroke: 0.4px #333;
	display: flex;
	align-items: center;
	padding: 0 0 4px 24px;
	gap: 12px;
}
.tab-props svg {
	color: #777;
}
.tab-ics {
	display: flex;
	gap: 12px;
	padding-top: 9px;
}
.tab-ic {
	width: 55px;
	height: 55px;
	box-sizing: border-box;
	border: 2px solid #ccc;
	display: flex;
	align-items: center;
	justify-content: center;
	color: #777;
}
.tab-ic.on {
	background: #efefef;
	border-bottom: 4px solid #aaa;
	color: #666;
}
.ic-doc {
	width: 24px;
	height: 30px;
}
.ic-frame {
	width: 30px;
	height: 30px;
}

/* form, row tops follow the reference spacing */
.form {
	flex: 1;
	min-height: 0;
	padding-left: 41px;
}
.row {
	display: flex;
	align-items: center;
}
.row > label {
	width: 208px;
	flex: none;
	display: block;
	color: #555;
}
.row label.two {
	align-self: flex-start;
	line-height: 41px;
}
.two span {
	display: block;
	white-space: nowrap;
}
.fi {
	width: 24px;
	height: 24px;
	margin-right: 8px;
	vertical-align: -3px;
	color: #555;
}
.fi.wide {
	width: 31px;
	margin-right: 6px;
}
.inp {
	height: 66px;
	box-sizing: border-box;
	border: 2px solid #ccc;
	border-radius: 6px;
	background: #fff;
	color: #555;
	padding: 0 12px;
	outline: none;
}
.inp::placeholder {
	color: #aaa;
}
.w-full {
	width: 643px;
}
.off {
	background: #f7f7f7;
}
.off::placeholder {
	color: #bbb;
}
.r-label {
	margin-top: 21px;
}
.r-client {
	margin-top: 26px;
}
.sel-wrap {
	position: relative;
	width: 471px;
	height: 66px;
	margin-right: 21px;
}
.sel-wrap select {
	width: 100%;
	appearance: none;
	padding-left: 20px;
}
.sel-chev {
	position: absolute;
	right: 8px;
	top: 26px;
	width: 16px;
	height: 12px;
	color: #333;
}
.sq {
	width: 66px;
	height: 66px;
	box-sizing: border-box;
	border: 2px solid #ccc;
	border-radius: 3px;
	background: #fff;
	color: #888;
	padding: 0;
	display: flex;
	align-items: center;
	justify-content: center;
}
.sq.plus {
	margin-left: 21px;
	width: 64px;
}
.r-choose {
	margin-top: 25px;
	height: 96px;
	align-items: flex-end;
}
.srcs {
	display: flex;
	gap: 8px;
}
.src {
	height: 72px;
	border: 0;
	border-radius: 6px;
	color: #fff;
	padding: 0;
	display: flex;
	align-items: center;
	justify-content: center;
	gap: 10px;
}
.device {
	width: 170px;
	background: #1fc198;
}
.craft {
	width: 227px;
	background: #8fc11e;
}
.upload {
	width: 180px;
	margin-left: 3px;
	background: #2a7eb8;
	gap: 16px;
}
.ic-cloud {
	width: 30px;
	height: 26px;
}
.ic-upload {
	width: 28px;
	height: 28px;
}
.r-name {
	margin-top: 35px;
}
.r-slider {
	height: 31px;
}
.r-slider label, .val {
	margin-top: -5px;
}
.conf {
	margin-top: 32px;
}
.iou {
	margin-top: 43px;
}
.slider {
	width: 550px;
	height: 16px;
	box-sizing: border-box;
	background: #eeeeee;
	border: 2px solid #bbb;
	border-radius: 8px;
	position: relative;
	margin-top: 1px;
}
.slider .fill {
	position: absolute;
	left: -2px;
	top: -2px;
	height: 16px;
	background: #777;
	border-radius: 8px 0 0 8px;
}
.slider .thumb {
	position: absolute;
	top: -10px;
	width: 28px;
	height: 31px;
	border-radius: 50%;
	background: #777;
}
.conf .fill { width: 245px; }
.conf .thumb { left: 229px; }
.iou .fill { width: 141px; }
.iou .thumb { left: 125px; }
.val {
	margin-left: 9px;
}
.chk {
	appearance: none;
	margin: 0;
	width: 25px;
	height: 25px;
	box-sizing: border-box;
	border: 2px solid #777;
	border-radius: 4px;
	background: #fff;
}
.chk:disabled {
	background: #f3f3f3;
	border-color: #ccc;
}
.r-base {
	margin-top: 37px;
	height: 81px;
	align-items: flex-end;
}
.r-base .chk {
	margin-bottom: 3px;
}
.r-trace {
	margin-top: 33px;
	height: 40px;
}
.r-trace .chk {
	margin-top: 12px;
}
.r-count {
	margin-top: 34px;
	height: 40px;
}
.r-count .chk {
	margin-top: 14px;
}
.r-classes {
	margin-top: 33px;
	height: 67px;
	align-items: flex-start;
}
.r-classes label {
	padding-top: 15px;
}
.class-box {
	margin-top: 12px;
	width: 919px;
	height: 306px;
	box-sizing: border-box;
	border: 2px solid #ccc;
	border-radius: 6px;
	background: #f8f8f8;
	padding: 20px 21px 0 0;
	display: flex;
	flex-direction: column;
	gap: 22px;
}
.class-row {
	display: flex;
	align-items: center;
}
.class-row b {
	width: 80px;
	text-align: center;
	font-weight: bold;
	font-size: 28px;
	color: #555;
}
.class-row .inp {
	flex: 1;
	min-width: 0;
}
.tray-foot {
	height: 74px;
	flex: none;
	box-sizing: border-box;
	border-top: 2px solid #bbb;
	border-bottom: 2px solid #bbb;
	background: #f3f3f3;
	display: flex;
	align-items: center;
	padding-left: 13px;
	gap: 11px;
}
.foot-btn {
	height: 50px;
	box-sizing: border-box;
	border: 2px solid #ccc;
	background: #fff;
	display: flex;
	align-items: center;
	font-size: 26px;
	color: #666;
}
.book {
	width: 58px;
	justify-content: center;
	color: #777;
}
.enabled {
	width: 177px;
	padding-left: 18px;
}
.ring {
	width: 22px;
	height: 22px;
	box-sizing: border-box;
	border: 2px solid #666;
	border-radius: 50%;
	margin-right: 18px;
}
.red-box {
	position: absolute;
	box-sizing: border-box;
	border: 6px solid #ee4e44;
	border-radius: 5px;
	pointer-events: none;
}
.upload-mark {
	left: 662px;
	top: 431px;
	width: 207px;
	height: 115px;
}
.classes-mark {
	left: 23px;
	top: 1055px;
	width: 981px;
	height: 432px;
}

/* sidebar */
.split {
	width: 15px;
	flex: none;
	background: #f3f3f3;
	position: relative;
}
.split i {
	position: absolute;
	left: 4px;
	top: 779px;
	width: 6px;
	height: 100px;
	background: #dddddd;
}
.sidebar {
	flex: 1;
	min-width: 0;
	box-sizing: border-box;
	border-left: 2px solid #c4c4c4;
	display: flex;
	flex-direction: column;
	background: #fff;
}
.side-tabs {
	height: 72px;
	flex: none;
	box-sizing: border-box;
	border-bottom: 2px solid #bbb;
	display: flex;
	padding-left: 5px;
	position: relative;
}
.side-tab {
	width: 266px;
	height: 64px;
	margin-top: 8px;
	box-sizing: border-box;
	border: 2px solid #b5b5b5;
	border-bottom: 0;
	background: #fff;
	color: #333;
	-webkit-text-stroke: 0.4px #333;
	display: flex;
	align-items: center;
	padding: 0 0 4px 25px;
	gap: 8px;
	margin-right: 20px;
}
.side-tab .ic-bug {
	color: #777;
}
.side-ic {
	width: 56px;
	height: 56px;
	margin-top: 10px;
	margin-right: 12px;
	box-sizing: border-box;
	border: 2px solid #ccc;
	display: flex;
	align-items: center;
	justify-content: center;
	color: #777;
}
.side-ic.on {
	background: #efefef;
	border-bottom: 4px solid #aaa;
	color: #666;
}
.ic-bug {
	width: 26px;
	height: 30px;
}
.ic-info {
	width: 14px;
	height: 24px;
}
.side-caret {
	position: absolute;
	left: 581px;
	top: 34px;
	width: 18px;
	height: 11px;
	color: #777;
}
.side-tools {
	height: 85px;
	flex: none;
	box-sizing: border-box;
	background: #f3f3f3;
	border-bottom: 2px solid #ddd;
	display: flex;
	justify-content: flex-end;
	padding: 16px 42px 0 0;
	gap: 20px;
}
.tool {
	height: 49px;
	box-sizing: border-box;
	border: 2px solid #ccc;
	background: #fff;
	display: flex;
	align-items: center;
	font-size: 26px;
	color: #888;
	padding-left: 15px;
}
.tool.nodes {
	width: 194px;
}
.tool.clear {
	width: 120px;
}
.ic-filter {
	width: 22px;
	height: 24px;
	margin-right: 6px;
}
.ic-trash {
	width: 20px;
	height: 24px;
	margin-right: 8px;
}
.tool-caret {
	width: 16px;
	height: 10px;
	margin-left: auto;
	margin-right: 10px;
}
.side-body {
	flex: 1;
}
.side-foot {
	height: 54px;
	flex: none;
	box-sizing: border-box;
	background: #f3f3f3;
	border-top: 2px solid #bbb;
	border-bottom: 2px solid #bbb;
	display: flex;
	justify-content: flex-end;
	align-items: center;
	padding-right: 14px;
}
.mon {
	width: 38px;
	height: 38px;
	box-sizing: border-box;
	border: 2px solid #ccc;
	background: #fff;
	display: flex;
	align-items: center;
	justify-content: center;
	color: #777;
}
.ic-mon {
	width: 26px;
	height: 24px;
}
```
